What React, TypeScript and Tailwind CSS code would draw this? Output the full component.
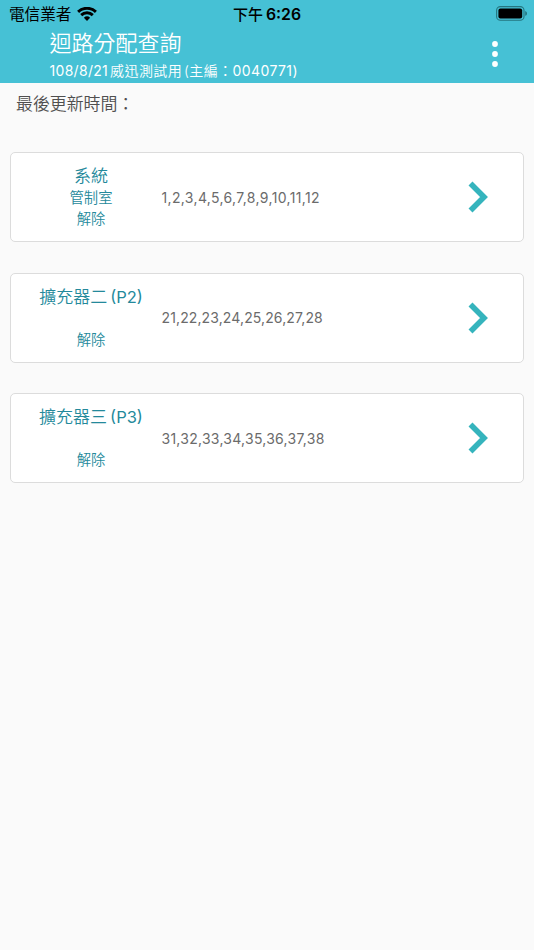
import React from 'react';

const circuits = [
  { id: 1, name: '系統', suffix: '', room: '管制室', status: '解除', loops: '1,2,3,4,5,6,7,8,9,10,11,12', tracking: 'tracking-[0.35px]' },
  { id: 2, name: '擴充器二', suffix: '(P2)', room: '', status: '解除', loops: '21,22,23,24,25,26,27,28', tracking: 'tracking-[0.12px]' },
  { id: 3, name: '擴充器三', suffix: '(P3)', room: '', status: '解除', loops: '31,32,33,34,35,36,37,38', tracking: 'tracking-[0.26px]' },
];

const StatusBar = () => {
  return (
    <div className="grid h-7 grid-cols-3 items-center pl-[9px] pr-[7px] text-black">
      <div className="flex items-center gap-[6px]">
        <span className="pt-px text-[15.6px] font-normal leading-7">電信業者</span>
        <svg width="20" height="14" viewBox="0 0 20 14" fill="none" stroke="#000" strokeWidth="2.9" className="-mt-[2px]">
          <path d="M1.1 4.9a12.7 12.7 0 0 1 17.8 0" />
          <path d="M4.2 8.1a8.3 8.3 0 0 1 11.6 0" />
          <path d="M10 13.9 6.9 10.8a4.5 4.5 0 0 1 6.2 0Z" fill="#000" stroke="none" />
        </svg>
      </div>
      <div className="flex items-center justify-center gap-[3px] pr-[2px] leading-[27px]">
        <span className="text-[15px] font-medium">下午</span>
        <span className="text-[15.8px] font-semibold">6:26</span>
      </div>
      <div className="flex justify-end">
        <svg width="31" height="15" viewBox="0 0 31 15" className="-mt-[2px]">
          <rect x="0.6" y="0.6" width="27.4" height="13.6" rx="3.8" fill="none" stroke="#257680" strokeWidth="1.1" />
          <rect x="2.4" y="2.4" width="23.8" height="10" rx="2" fill="#000" />
          <path d="M29.2 5c2.4.8 2.4 4 0 4.800Z" fill="#257680" />
        </svg>
      </div>
    </div>
  );
};

const App = () => {
  return (
    <div className="min-h-[950px] w-full bg-[#fafafa] font-['Inter','Noto_Sans_CJK_TC',sans-serif] font-[350]">
      <header className="h-[83px] bg-[#46c1d5]">
        <StatusBar />
        {/* Title bar */}
        <div className="flex justify-between pl-[49.5px] pr-[35px] text-white">
          <div>
            <h1 className="text-[22px] font-[350] leading-[30px]">迴路分配查詢</h1>
            <p className="flex whitespace-nowrap text-[14px] font-[350] leading-[25px] tracking-[0.4px]">
              <span className="font-normal tracking-[0.3px]">108/8/21</span>
              <span className="ml-[2px]">威迅測試用</span>
              <span className="ml-[2px]">(主編：</span>
              <span className="font-normal">0040771)</span>
            </p>
          </div>
          <button type="button" aria-label="menu" className="flex h-[52px] items-center">
            <svg width="8" height="28" viewBox="0 0 8 28" fill="#fff">
              <circle cx="4" cy="4" r="2.9" />
              <circle cx="4" cy="14" r="2.9" />
              <circle cx="4" cy="24" r="2.9" />
            </svg>
          </button>
        </div>
      </header>

      <main className="px-[10px]">
        <p className="h-[69.3px] pl-[6px] text-[16.9px] leading-[43px] text-[#4f4f4f]">最後更新時間：</p>
        <div className="flex flex-col gap-[30.4px]">
          {circuits.map((item) => (
            <div key={item.id} className="flex h-[90px] w-[514px] items-center rounded-[5px] border border-[#dcdcdc] bg-white">
              <div className="flex w-[160px] flex-col items-center text-[14.3px] leading-[21px] text-[#24899b]">
                <h2 className="flex h-[22px] gap-[3px] whitespace-nowrap text-[17px] leading-[22px]">
                  <span>{item.name}</span>
                  {item.suffix && <span className="text-[16.5px] font-normal">{item.suffix}</span>}
                </h2>
                <p className="h-[21px]">{item.room}</p>
                <p className="h-[21px]">{item.status}</p>
              </div>
              <p className={`-ml-[9.5px] w-[296px] shrink-0 text-[14px] font-normal text-[#6b6b6b] ${item.tracking}`}>{item.loops}</p>
              <svg className="ml-[10px]" width="22" height="32" viewBox="0 0 22 32" fill="none" stroke="#35b4bd" strokeWidth="5.6">
                <path d="M2.500 2.500 16 16 2.500 29.500" />
              </svg>
            </div>
          ))}
        </div>
      </main>
    </div>
  );
};

export default App;
